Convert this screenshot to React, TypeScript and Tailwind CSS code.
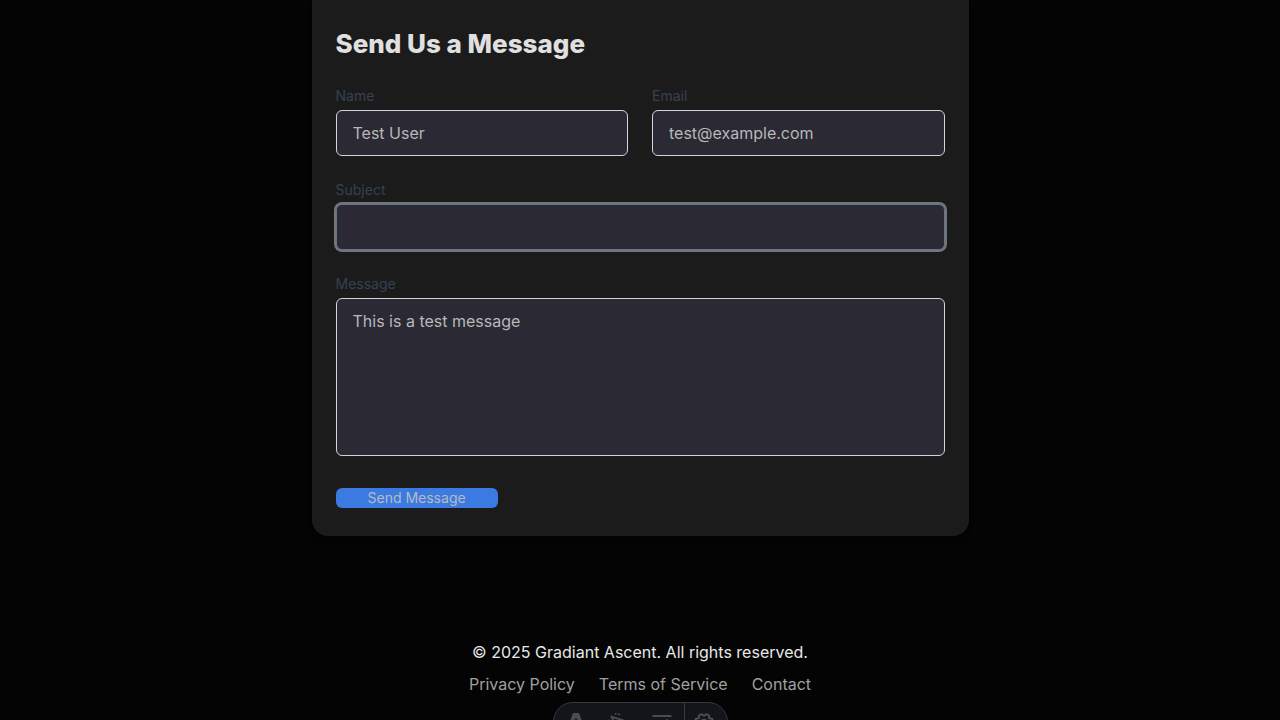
import type { ReactNode } from "react";

const field =
  "block w-full rounded-md border border-[#d1d5db] bg-[#2b2933] px-4 text-base leading-6 text-[#b8b8b8] outline-none";

function Field({ id, label, children }: { id: string; label: string; children: ReactNode }) {
  return (
    <div className="flex flex-col gap-1">
      <label htmlFor={id} className="text-sm leading-5 text-[#374151]">
        {label}
      </label>
      {children}
    </div>
  );
}

function Toolbar() {
  const item = "flex h-full w-[43px] items-center justify-center";
  return (
    <div className="fixed inset-x-0 -bottom-[22px] flex justify-center">
      <div className="flex h-10 overflow-hidden rounded-full border border-[#343841] bg-[#13151a] pr-1 pl-px text-[#4c4c50]">
        <button type="button" aria-label="Menu" className={item}>
          <svg viewBox="0 0 85 107" className="h-[19px] w-4" fill="currentColor">
            <path d="M27.6 91.1C22.8 86.7 21.3 77.4 23.4 70.7C26.9 74.9 31.7 76.3 36.7 77C44.4 78.2 52 77.8 59.2 74.2C60 73.8 60.8 73.3 61.7 72.8C62.4 74.7 62.6 76.7 62.3 78.7C61.7 83.6 59.3 87.4 55.4 90.2C53.9 91.4 52.2 92.4 50.6 93.5C45.7 96.8 44.4 100.7 46.2 106.4C41 104 38 99 37.6 94C32 96 30 94 27.6 91.1Z" />
            <path d="M0 69.6S14.3 62.6 28.7 62.6L39.5 29.1C39.9 27.5 41.1 26.4 42.4 26.4C43.7 26.4 44.9 27.5 45.3 29.1L56.2 62.6C73.2 62.6 84.8 69.6 84.8 69.6S60.5 3.4 60.5 3.2C59.8 1.3 58.6 0 57 0H27.8C26.2 0 25.1 1.3 24.4 3.2Z" />
          </svg>
        </button>
        <button type="button" aria-label="Inspect" className={item}>
          <svg viewBox="0 0 20 20" className="size-5" fill="none" stroke="currentColor" strokeWidth="1.8">
            <path d="M2.3 4.6 17.2 9.4 11.6 11.5 9.2 17.4Z" strokeLinejoin="round" />
            <path d="M6.6 2.8V1.1M9.6 3.2l.9-1.7M1 8.2l-1 .4M2.3 12l-1.2.9" />
          </svg>
        </button>
        <button type="button" aria-label="Audit" className={item}>
          <svg viewBox="0 0 20 20" className="size-5" fill="none" stroke="currentColor" strokeWidth="2">
            <path d="M.5 4h19M.5 10h9M.5 16h7" />
            <path d="M15 7.3v6.2M15 15.3v2" />
          </svg>
        </button>
        <div className="w-px bg-[#343841]" />
        <button type="button" aria-label="Settings" className="flex h-full w-[38px] items-center justify-center">
          <svg viewBox="0 0 20 20" className="size-5" fill="none" stroke="currentColor" strokeWidth="2" strokeLinejoin="round">
            <path d="m10 3.8 2.2-1.6 2.8 1.2.3 2.9 2.8.5 1 2.7L17.5 12l1.2 2.3-2.1 2.2-2.7-.4-1.4 2.4h-5l-1.4-2.4-2.7.4-2.1-2.2L2.5 12 .9 9.5l1-2.7 2.8-.5L5 3.4l2.8-1.2Z" />
            <circle cx="10" cy="10.5" r="2.8" />
          </svg>
        </button>
      </div>
    </div>
  );
}

export default function App() {
  return (
    <div className="min-h-screen bg-[#040404] font-['Inter',sans-serif] text-base">
      <main className="mx-auto w-full max-w-[657px] rounded-b-2xl bg-[#1b1b1b] px-6 pt-7 pb-7 shadow-md">
        <h1 className="text-[26px] leading-8 font-extrabold text-[#e0e0e0]">Send Us a Message</h1>
        <form className="mt-[26px] flex flex-col gap-6">
          <div className="grid grid-cols-1 gap-6 sm:grid-cols-2">
            <Field id="name" label="Name">
              <input id="name" type="text" defaultValue="Test User" className={`${field} h-[46px]`} />
            </Field>
            <Field id="email" label="Email">
              <input id="email" type="email" defaultValue="test@example.com" className={`${field} h-[46px]`} />
            </Field>
          </div>
          <Field id="subject" label="Subject">
            <input
              id="subject"
              type="text"
              className="block h-[46px] w-full rounded-md border border-[#64748b] bg-[#2b2933] px-4 text-base leading-6 text-[#b8b8b8] ring-2 ring-[#74747b] outline-none"
            />
          </Field>
          <Field id="message" label="Message">
            <textarea id="message" defaultValue="This is a test message" className={`${field} h-[158px] resize-none py-2.5`} />
          </Field>
          <button type="submit" className="mt-2 self-start rounded-md bg-[#3b7ae0] px-8 text-sm leading-5 text-[#b8bbc0]">
            Send Message
          </button>
        </form>
      </main>
      <footer className="mt-[104px] flex flex-col items-center gap-2 leading-6 text-[#e8e8e8]">
        <p>© 2025 Gradiant Ascent. All rights reserved.</p>
        <nav className="flex gap-6 text-[#a0a0a0]">
          <a href="#privacy">Privacy Policy</a>
          <a href="#terms">Terms of Service</a>
          <a href="#contact">Contact</a>
        </nav>
      </footer>
      <Toolbar />
    </div>
  );
}
